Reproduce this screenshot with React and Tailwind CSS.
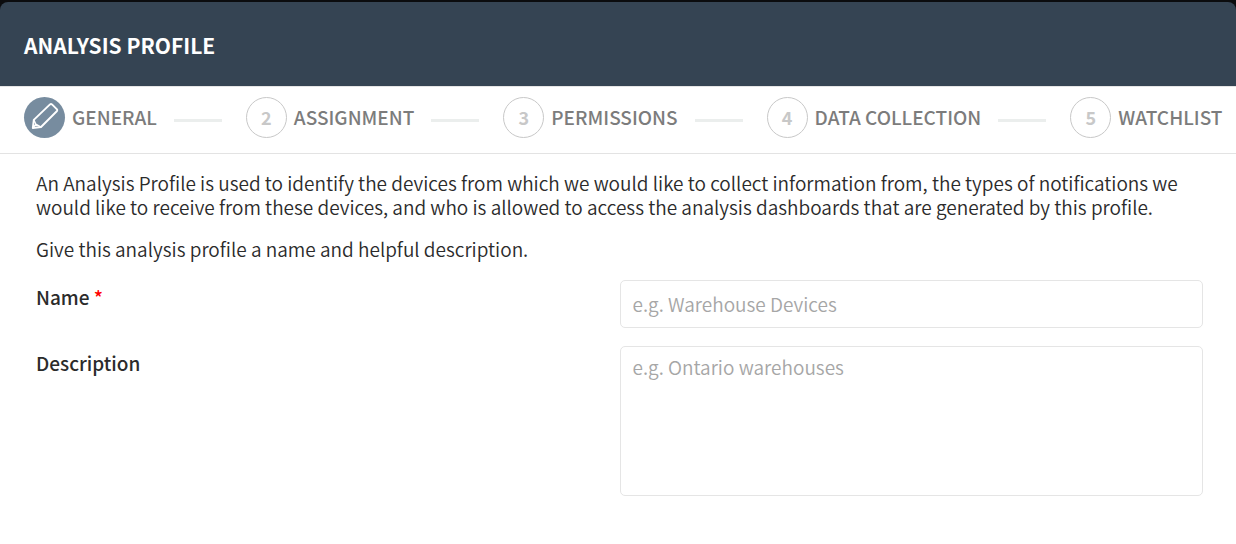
const steps = ['General', 'Assignment', 'Permissions', 'Data Collection', 'Watchlist'];

function PencilIcon() {
  return (
    <svg
      className="size-[41px]"
      viewBox="0 0 41 41"
      fill="none"
      stroke="currentColor"
      strokeWidth="1.9"
      strokeLinejoin="round"
      strokeLinecap="round"
      aria-hidden="true"
    >
      <path d="M28 7.4 L33 12.4 Q33.6 13.2 33 14 L17 30 L8.8 31 L9.8 22.9 L26 7.4 Q27 6.6 28 7.4 Z" />
      <path d="M10 23.2 L11.8 27.2 L16.6 29.8 M11.8 27.2 L9.2 30.6" strokeWidth="1.5" />
    </svg>
  );
}

function Step({ number, label, active }) {
  return (
    <button
      type="button"
      aria-current={active ? 'step' : undefined}
      className="flex items-center gap-[7px] text-[19px] leading-6 font-medium uppercase whitespace-nowrap text-[#7c7c7c]"
    >
      {active ? (
        <span className="flex size-[41px] shrink-0 items-center justify-center rounded-full bg-[#778c9f] text-white">
          <PencilIcon />
        </span>
      ) : (
        <span className="flex size-[41px] shrink-0 items-center justify-center rounded-full border border-[#c8c8c8] pb-0.5 text-[18px] font-bold text-[#c8c8c8]">
          {number}
        </span>
      )}
      <span className="pb-0.5">{label}</span>
    </button>
  );
}

export default function App() {
  return (
    <div className="bg-[#0b0c0e] pt-0.5 font-['Noto_Sans_CJK_JP',sans-serif] text-[#2b2b2b]">
      <header className="rounded-t-lg border-b border-[#e5e5e5] bg-[#354453] px-6 pt-[31px] pb-[29px]">
        <h1 className="text-[21px] leading-6 font-bold text-white uppercase">Analysis Profile</h1>
      </header>

      <main className="min-h-[calc(100vh-87px)] bg-white">
        {/* Wizard steps */}
        <nav aria-label="Profile steps" className="overflow-hidden border-b border-[#e3e3e3] px-6 pt-[10px] pb-[15px]">
          <ol className="flex items-center">
            {steps.map((label, i) => (
              <li key={label} className="flex shrink-0 items-center">
                {i > 0 && <span className="mt-1.5 mr-6 ml-[17px] h-[3px] w-12 bg-[#ebeeed]" />}
                <Step number={i + 1} label={label} active={i === 0} />
              </li>
            ))}
          </ol>
        </nav>

        <form className="pt-[17px] pr-[33px] pb-12 pl-9 text-[19px] leading-6">
          <p className="font-[350]">
            An Analysis Profile is used to identify the devices from which we would like to collect information from,
            the types of notifications we would like to receive from these devices, and who is allowed to access the
            analysis dashboards that are generated by this profile.
          </p>
          <p className="mt-[18px] font-[350]">Give this analysis profile a name and helpful description.</p>

          <div className="mt-[19px] grid grid-cols-2 gap-y-[18px]">
            <label htmlFor="profile-name" className="pt-[5px] font-medium">
              Name <span className="text-[#ff0000]">*</span>
            </label>
            <input
              id="profile-name"
              type="text"
              required
              placeholder="e.g. Warehouse Devices"
              className="h-12 w-full rounded-[5px] border border-[#e5e5e5] px-3 pb-0.5 font-[350] placeholder:text-[#a6a6a6]"
            />

            <label htmlFor="profile-description" className="pt-[5px] font-medium">
              Description
            </label>
            <textarea
              id="profile-description"
              placeholder="e.g. Ontario warehouses"
              className="block h-[150px] w-full resize-none rounded-[5px] border border-[#e5e5e5] px-3 py-2 font-[350] placeholder:text-[#a6a6a6]"
            />
          </div>
        </form>
      </main>
    </div>
  );
}
